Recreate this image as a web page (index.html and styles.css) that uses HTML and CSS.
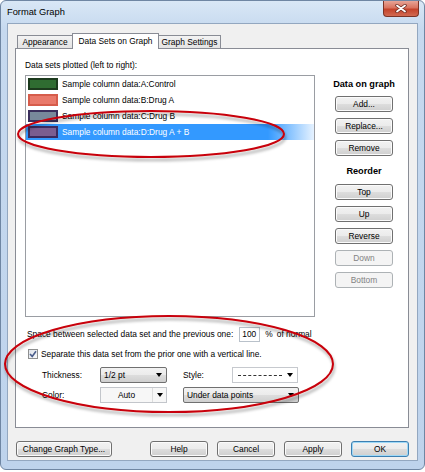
FILE: index.html
```html
<!DOCTYPE html>
<html lang="en">
<head>
    <meta charset="UTF-8">
    <meta name="viewport" content="width=device-width, initial-scale=1.0">
    <title>Format Graph</title>
    <link rel="stylesheet" href="styles.css">
</head>
<body>
    <div class="window">
        <div class="titlebar">
            <span class="title">Format Graph</span>
            <button class="close-btn" aria-label="Close">
                <svg width="12" height="9" viewBox="0 0 12 9">
                    <path d="M2 1.5 L10 7.5 M10 1.5 L2 7.5" stroke="#6b2a20" stroke-width="3.4" stroke-linecap="round"/>
                    <path d="M2 1.5 L10 7.5 M10 1.5 L2 7.5" stroke="#ffffff" stroke-width="1.8" stroke-linecap="round"/>
                </svg>
            </button>
        </div>

        <div class="client">
            <div class="tabs">
                <div class="tab tab-appearance">Appearance</div>
                <div class="tab tab-active">Data Sets on Graph</div>
                <div class="tab tab-settings">Graph Settings</div>
            </div>

            <div class="panel">
                <div class="panel-top">
                    <div class="datasets">
                        <div class="caption">Data sets plotted (left to right):</div>
                        <ul class="listbox">
                            <li class="item"><span class="swatch swatch-a"></span>Sample column data:A:Control</li>
                            <li class="item"><span class="swatch swatch-b"></span>Sample column data:B:Drug A</li>
                            <li class="item"><span class="swatch swatch-c"></span>Sample column data:C:Drug B</li>
                            <li class="item selected"><span class="swatch swatch-d"></span>Sample column data:D:Drug A + B</li>
                        </ul>
                    </div>

                    <div class="side">
                        <div class="side-title">Data on graph</div>
                        <button class="btn">Add...</button>
                        <button class="btn">Replace...</button>
                        <button class="btn">Remove</button>
                        <div class="side-title reorder">Reorder</div>
                        <button class="btn btn-top">Top</button>
                        <button class="btn">Up</button>
                        <button class="btn">Reverse</button>
                        <button class="btn" disabled>Down</button>
                        <button class="btn" disabled>Bottom</button>
                    </div>
                </div>

                <div class="spacing-row">
                    <span>Space between selected data set and the previous one:</span>
                    <input class="num-input" type="text" value="100">
                    <span class="pct">%</span>
                    <span>of normal</span>
                </div>

                <div class="check-row">
                    <span class="checkbox">
                        <svg width="8" height="8" viewBox="0 0 8 8">
                            <path d="M1 4 L3.2 6.4 L7 1.2" fill="none" stroke="#4a5d8c" stroke-width="1.6"/>
                        </svg>
                    </span>
                    <span>Separate this data set from the prior one with a vertical line.</span>
                </div>

                <div class="line-grid">
                    <span class="field-label">Thickness:</span>
                    <div class="combo combo-button">
                        <span>1/2 pt</span>
                        <i class="arrow"></i>
                    </div>
                    <span class="field-label col-style">Style:</span>
                    <div class="combo combo-white">
                        <span class="dash"></span>
                        <i class="arrow"></i>
                    </div>

                    <span class="field-label">Color:</span>
                    <div class="combo combo-color">
                        <span class="color-value">Auto</span>
                        <span class="color-drop"><i class="arrow"></i></span>
                    </div>
                    <div class="combo combo-button combo-wide">
                        <span>Under data points</span>
                        <i class="arrow"></i>
                    </div>
                </div>
            </div>

            <div class="footer">
                <button class="btn btn-type">Change Graph Type...</button>
                <div class="footer-right">
                    <button class="btn">Help</button>
                    <button class="btn">Cancel</button>
                    <button class="btn">Apply</button>
                    <button class="btn btn-default">OK</button>
                </div>
            </div>
        </div>
    </div>

    <svg class="annotations" width="425" height="472" viewBox="0 0 425 472">
        <defs>
            <filter id="shadow" x="-10%" y="-40%" width="120%" height="180%">
                <feDropShadow dx="1" dy="3" stdDeviation="1.6" flood-color="#000" flood-opacity="0.35"/>
            </filter>
        </defs>
        <ellipse cx="151" cy="134" rx="133" ry="23" fill="none" stroke="#c80008" stroke-width="2" filter="url(#shadow)"/>
        <ellipse cx="169" cy="364" rx="164" ry="48" fill="none" stroke="#c80008" stroke-width="2" filter="url(#shadow)"/>
    </svg>
</body>
</html>
```

FILE: styles.css
```css
:root {
    --frame-border: #6f86a3;
    --client-bg: #f0f0f0;
    --tab-border: #898c95;
    --btn-border: #707070;
    --text: #000000;
    --text-disabled: #838383;
    --select: #3399ff;
}

* {
    box-sizing: border-box;
}

body {
    margin: 0;
    position: relative;
    background: #ffffff;
    color: var(--text);
    font-family: "Liberation Sans", Arial, sans-serif;
    font-size: 8.4px;
}

button, input {
    font-family: inherit;
    font-size: inherit;
    color: inherit;
}

.window {
    width: 425px;
    height: 470px;
    border: 1px solid var(--frame-border);
    border-radius: 6px;
    background: linear-gradient(#d9e7f6, #c6d9ef 28px, #bed3ec);
    padding: 0 6px 8px;
    display: flex;
    flex-direction: column;
}

/* title bar */
.titlebar {
    height: 22px;
    display: flex;
    justify-content: space-between;
    align-items: flex-start;
}

.title {
    font-size: 9.3px;
    line-height: 12px;
    margin-top: 5px;
}

.close-btn {
    width: 36px;
    height: 16px;
    margin-right: -1px;
    padding: 0;
    border: 1px solid #7b3326;
    border-top: none;
    border-radius: 0 0 4px 4px;
    background: linear-gradient(#e7a597, #d9735f 45%, #c4432b 55%, #d16a52);
    display: flex;
    align-items: center;
    justify-content: center;
}

/* client area */
.client {
    flex: 1;
    background: var(--client-bg);
    border: 1px solid #93a7c0;
    padding: 9px 8px 3px 7px;
    display: flex;
    flex-direction: column;
}

.tabs {
    height: 15px;
    padding-left: 2px;
    display: flex;
    align-items: flex-end;
    position: relative;
    z-index: 1;
}

.tab {
    height: 13px;
    border: 1px solid var(--tab-border);
    border-bottom: none;
    background: linear-gradient(#f3f3f3, #e3e3e3);
    display: flex;
    align-items: center;
    justify-content: center;
    white-space: nowrap;
}

.tab-appearance {
    width: 55px;
    border-right: none;
}

.tab-active {
    width: 87px;
    height: 16px;
    margin-bottom: -1px;
    padding-bottom: 1px;
    background: #ffffff;
}

.tab-settings {
    width: 62px;
    border-left: none;
}

.panel {
    height: 380px;
    border: 1px solid var(--tab-border);
    background: #ffffff;
    padding: 11px 0 0 9px;
}

.panel-top {
    display: flex;
}

.caption {
    line-height: 10px;
    margin-bottom: 5px;
}

.listbox {
    list-style: none;
    margin: 0;
    padding: 0;
    width: 290px;
    height: 242px;
    border: 1px solid #9a9da3;
}

.item {
    height: 16px;
    padding-left: 2px;
    display: flex;
    align-items: center;
    gap: 4px;
    white-space: nowrap;
}

.item.selected {
    color: #ffffff;
    background: linear-gradient(to right, var(--select) 84%, #e6f2ff);
}

.swatch {
    width: 30px;
    height: 12px;
    border: 2px solid;
}

.swatch-a { border-color: #1c3a1d; background: #2f6c31; }
.swatch-b { border-color: #d65c4b; background: #e9796a; }
.swatch-c { border-color: #3a2f5c; background: #78899b; }
.swatch-d { border-color: #3d2b5e; background: #7b5d90; }

/* right column */
.side {
    width: 58px;
    margin-left: 20px;
    display: flex;
    flex-direction: column;
    align-items: center;
}

.side-title {
    margin-top: 18px;
    line-height: 12px;
    font-size: 9.2px;
    font-weight: bold;
    white-space: nowrap;
}

.side-title.reorder {
    margin-top: 9px;
}

.side .btn {
    width: 58px;
    margin-top: 6px;
}

.side .btn-top {
    margin-top: 7px;
}

.btn {
    height: 16px;
    padding: 0;
    border: 1px solid var(--btn-border);
    border-radius: 3px;
    background: linear-gradient(#f2f2f2 0%, #ebebeb 50%, #dddddd 51%, #cfcfcf 100%);
    box-shadow: inset 0 0 0 1px #fbfbfb;
    white-space: nowrap;
}

.btn:disabled {
    color: var(--text-disabled);
    border-color: #adb2b5;
    background: #f4f4f4;
    box-shadow: none;
}

.btn-default {
    border-color: #3c7fb1;
    box-shadow: inset 0 0 0 1px #9fd9f7;
}

/* options below the list */
.spacing-row {
    height: 16px;
    margin-top: 9px;
    padding-left: 2px;
    display: flex;
    align-items: center;
}

.num-input {
    width: 21px;
    height: 15px;
    margin-left: 6px;
    padding: 0 0 0 2px;
    border: 1px solid #b9c1ca;
    background: #ffffff;
}

.pct {
    margin: 0 4px 0 5px;
}

.check-row {
    height: 12px;
    margin-top: 6px;
    padding-left: 3px;
    display: flex;
    align-items: center;
    gap: 3px;
}

.checkbox {
    width: 10px;
    height: 10px;
    border: 1px solid #8e8f8f;
    background: linear-gradient(135deg, #dfe3ea, #f8f9fb);
    display: flex;
    align-items: center;
    justify-content: center;
}

.line-grid {
    margin-top: 7px;
    padding-left: 17px;
    display: grid;
    grid-template-columns: 58px 67px 16px 49px 66px;
    grid-auto-rows: 16px;
    row-gap: 4px;
    align-items: center;
}

.col-style {
    grid-column: 4;
}

.combo {
    height: 16px;
    display: flex;
    align-items: center;
    justify-content: space-between;
    padding: 0 4px 0 3px;
}

.combo-button {
    border: 1px solid var(--btn-border);
    border-radius: 2px;
    background: linear-gradient(#f2f2f2 0%, #ebebeb 50%, #dddddd 51%, #cfcfcf 100%);
}

.combo-white {
    border: 1px solid #c6c9ce;
    background: #ffffff;
    padding-left: 5px;
}

.combo-wide {
    grid-column: 4 / 6;
    margin-right: -1px;
}

.combo-color {
    border: 1px solid #c3c6cb;
    background: #f7f7f7;
    padding: 0;
}

.color-value {
    flex: 1;
    text-align: center;
}

.color-drop {
    width: 14px;
    height: 100%;
    border-left: 1px solid #dcdcdc;
    display: flex;
    align-items: center;
    justify-content: center;
}

.dash {
    width: 44px;
    border-top: 1px dashed #333333;
}

.arrow {
    width: 0;
    height: 0;
    border-left: 3.5px solid transparent;
    border-right: 3.5px solid transparent;
    border-top: 4px solid #000000;
}

/* bottom buttons */
.footer {
    margin-top: 13px;
    padding-left: 1px;
    display: flex;
    justify-content: space-between;
}

.btn-type {
    width: 96px;
}

.footer-right {
    display: flex;
    gap: 9px;
}

.footer-right .btn {
    width: 58px;
}

/* red hand-drawn marks over the dialog */
.annotations {
    position: absolute;
    top: 0;
    left: 0;
    pointer-events: none;
}
```
